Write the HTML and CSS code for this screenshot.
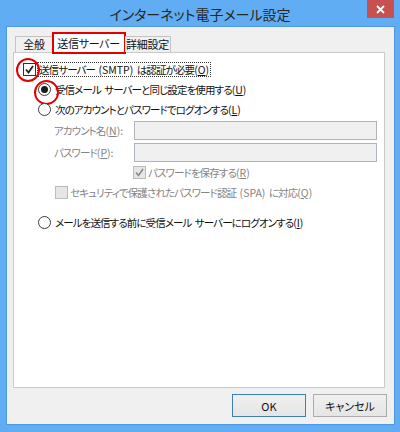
FILE: index.html
```html
<!DOCTYPE html>
<html lang="ja">
<head>
<meta charset="utf-8">
<title>インターネット電子メール設定</title>
<link rel="stylesheet" href="styles.css">
</head>
<body>
<div class="window">
  <div class="titlebar">
    <span class="title">インターネット電子メール設定</span>
    <div class="close">
      <svg width="9" height="9" viewBox="0 0 9 9"><path d="M1 1 L8 8 M8 1 L1 8" stroke="#fff" stroke-width="1.8" fill="none"/></svg>
    </div>
  </div>
  <div class="client">
    <div class="tabs">
      <div class="tab tab-general">全般</div>
      <div class="tab tab-send active">送信サーバー</div>
      <div class="tab tab-adv">詳細設定</div>
    </div>
    <div class="panel">
      <div class="row row-main">
        <span class="check marked circled-check"><svg width="11" height="11" viewBox="0 0 11 11"><path d="M2 5.5 L4.5 8.5 L9 2" stroke="#222" stroke-width="1.8" fill="none"/></svg></span>
        <span class="label focus">送信サーバー <span class="latin">(SMTP)</span> は認証が必要<span class="latin">(<u>O</u>)</span></span>
      </div>
      <div class="row row-radio">
        <span class="radio on circled-radio"><span class="dot"></span></span>
        <span class="label">受信メール サーバーと同じ設定を使用する<span class="latin">(<u>U</u>)</span></span>
      </div>
      <div class="row row-radio">
        <span class="radio"></span>
        <span class="label">次のアカウントとパスワードでログオンする<span class="latin">(<u>L</u>)</span></span>
      </div>
      <div class="field">
        <span class="field-label disabled">アカウント名<span class="latin">(<u>N</u>):</span></span>
        <span class="input"></span>
      </div>
      <div class="field field-second">
        <span class="field-label disabled">パスワード<span class="latin">(<u>P</u>):</span></span>
        <span class="input"></span>
      </div>
      <div class="row row-save">
        <span class="check dis"><svg width="11" height="11" viewBox="0 0 11 11"><path d="M2 5.5 L4.5 8.5 L9 2" stroke="#8a8a8a" stroke-width="1.6" fill="none"/></svg></span>
        <span class="label disabled">パスワードを保存する<span class="latin">(<u>R</u>)</span></span>
      </div>
      <div class="row row-spa">
        <span class="check dis"></span>
        <span class="label disabled">セキュリティで保護されたパスワード認証 <span class="latin">(SPA)</span> に対応<span class="latin">(<u>Q</u>)</span></span>
      </div>
      <div class="row row-radio row-last">
        <span class="radio"></span>
        <span class="label">メールを送信する前に受信メール サーバーにログオンする<span class="latin">(<u>I</u>)</span></span>
      </div>
    </div>
    <div class="buttons">
      <button class="btn default">OK</button>
      <button class="btn">キャンセル</button>
    </div>
  </div>
</div>
</body>
</html>
```

FILE: styles.css
```css
* { box-sizing: border-box; }

body {
  margin: 0;
  font-family: "Noto Sans CJK JP", "Noto Sans", sans-serif;
  font-size: 10.5px;
  font-feature-settings: "palt";
  color: #111;
}

.window {
  width: 400px;
  height: 432px;
  background: #60adf3;
  display: flex;
  flex-direction: column;
}

.titlebar {
  height: 27px;
  position: relative;
  display: flex;
  justify-content: center;
  align-items: center;
}

.title {
  font-size: 14px;
  color: #262626;
  margin-top: 1px;
}

.close {
  position: absolute;
  right: 6px;
  top: 0;
  width: 27px;
  height: 18px;
  background: #c75050;
  display: flex;
  align-items: center;
  justify-content: center;
}

.client {
  flex: 1;
  margin: 0 6px 8px 7px;
  background: #f0f0f0;
  box-shadow: 0 0 0 1px #4f98e0;
  padding: 6px 7px 7px 6px;
  display: flex;
  flex-direction: column;
}

.tabs {
  height: 20px;
  display: flex;
  align-items: flex-end;
  padding-left: 2px;
  position: relative;
  z-index: 1;
}

.tab {
  height: 16px;
  margin-bottom: 1px;
  border: 1px solid #c4c4c4;
  border-bottom: none;
  background: #f0f0f0;
  display: flex;
  align-items: center;
  justify-content: center;
  line-height: 1;
  font-size: 11px;
  letter-spacing: -0.3px;
}

.tab-general { width: 38px; }
.tab-send { width: 72px; }
.tab-adv { width: 46px; border-left: none; }

.tab.active {
  height: 20px;
  margin-bottom: 0;
  background: #fff;
  border-left: none;
  outline: 2px solid #e40000;
  outline-offset: -1px;
}

.panel {
  height: 336px;
  margin: -1px 2px 0 0;
  background: #fff;
  border: 1px solid #cbcbcb;
  padding: 6px 0 0 0;
  display: flex;
  flex-direction: column;
}

.row {
  height: 20px;
  display: flex;
  align-items: center;
}

.row-main { padding-left: 9px; }
.row-radio { padding-left: 24px; }
.row-save { padding-left: 119px; }
.row-spa { padding-left: 41px; }
.row-last { margin-top: 10px; }

.label, .field-label {
  white-space: pre;
  letter-spacing: -0.9px;
  word-spacing: 2px;
}

.latin { letter-spacing: 0; }

.label { margin-left: 2px; }
.row-radio .label { margin-left: 4px; }

.focus {
  outline: 1px dotted #333;
  outline-offset: 0;
  padding: 0 1px;
  line-height: 13px;
}

.disabled { color: #838383; }

.check {
  width: 13px;
  height: 13px;
  border: 1px solid #333;
  background: #fff;
  display: flex;
  align-items: center;
  justify-content: center;
  position: relative;
  flex: none;
}

.check.dis {
  border-color: #bcbcbc;
  background: #e6e6e6;
}

.radio {
  width: 13px;
  height: 13px;
  border: 1px solid #3c3c3c;
  border-radius: 50%;
  background: #fff;
  display: flex;
  align-items: center;
  justify-content: center;
  position: relative;
  flex: none;
}

.radio .dot {
  width: 7px;
  height: 7px;
  border-radius: 50%;
  background: #1a1a1a;
}

.circled-check::after {
  content: "";
  position: absolute;
  left: -8px;
  top: -6px;
  width: 20px;
  height: 20px;
  border: 2px solid #e40000;
  border-radius: 50%;
}

.circled-radio::after {
  content: "";
  position: absolute;
  left: -5px;
  top: -4px;
  width: 21px;
  height: 21px;
  border: 2px solid #e40000;
  border-radius: 50%;
}

.field {
  display: flex;
  align-items: center;
  padding-left: 40px;
  margin-top: 2px;
  height: 19px;
}

.field-second { margin-top: 3px; }

.field-label { width: 80px; }

.input {
  width: 243px;
  height: 19px;
  background: #f0f0f0;
  border: 1px solid #adb4bc;
}

.buttons {
  margin-top: 6px;
  display: flex;
  justify-content: flex-end;
  gap: 7px;
}

.btn {
  width: 74px;
  height: 23px;
  font-family: inherit;
  font-size: 11px;
  font-feature-settings: "palt";
  color: #111;
  background: linear-gradient(#f0f0f0, #e5e5e5);
  border: 1px solid #acacac;
  padding: 0;
  margin: 0;
}

.btn.default {
  border-color: #3c7fb1;
}
```
